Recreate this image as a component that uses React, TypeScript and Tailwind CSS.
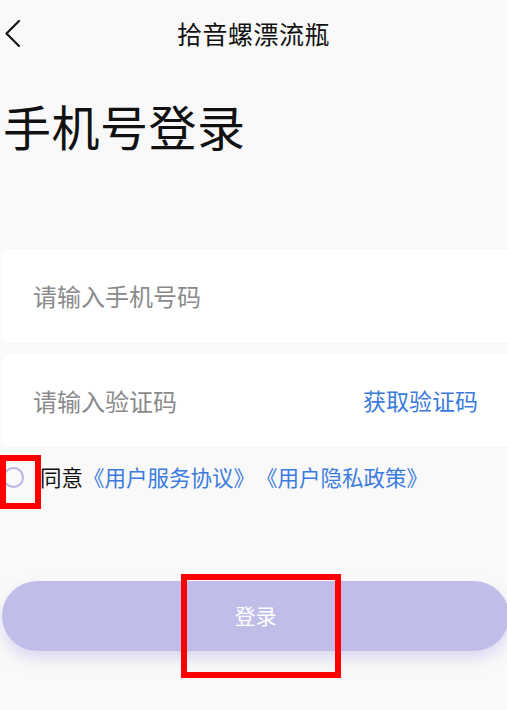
import React, { useState } from 'react';

const font = { fontFamily: '"Noto Sans CJK SC", "Noto Sans", sans-serif' };

export default function App() {
  const [phone, setPhone] = useState('');
  const [code, setCode] = useState('');
  const [agreed, setAgreed] = useState(false);

  return (
    <div className="relative w-[507px] h-[710px] overflow-hidden bg-[#f9f9f9]" style={font}>
      {/* Header */}
      <div className="relative h-[66px] flex items-center justify-center">
        <button className="absolute left-[4px] top-[19px] w-[18px] h-[30px] flex items-center">
          <svg width="18" height="30" viewBox="0 0 18 30" fill="none">
            <path d="M15 2 L2.5 14.5 L15 27" stroke="#111" strokeWidth="2.2" strokeLinecap="round" strokeLinejoin="round" />
          </svg>
        </button>
        <h1 className="text-[25px] leading-none text-[#111] tracking-[0.5px]">拾音螺漂流瓶</h1>
      </div>

      {/* Title */}
      <h2 className="mt-[35px] pl-[3px] text-[48px] leading-none text-[#111] tracking-[0.5px]">手机号登录</h2>

      {/* Inputs */}
      <div className="mt-[100px] ml-[2px] -mr-[8px] flex flex-col gap-[11px]">
        <div className="h-[94px] rounded-[7px] bg-white flex items-center pl-[31px]">
          <input
            value={phone}
            onChange={e => setPhone(e.target.value)}
            placeholder="请输入手机号码"
            className="w-full bg-transparent outline-none text-[24px] text-[#333] placeholder:text-[#8a8a8a]"
          />
        </div>
        <div className="h-[93px] rounded-[7px] bg-white flex items-center pl-[31px] pr-[37px]">
          <input
            value={code}
            onChange={e => setCode(e.target.value)}
            placeholder="请输入验证码"
            className="flex-1 min-w-0 bg-transparent outline-none text-[24px] text-[#333] placeholder:text-[#8a8a8a]"
          />
          <button className="text-[23px] text-[#3b7be0] whitespace-nowrap">获取验证码</button>
        </div>
      </div>

      {/* Agreement */}
      <div className="relative mt-[17px] flex items-center h-[26px]">
        <button
          onClick={() => setAgreed(!agreed)}
          className="ml-[3px] w-[21px] h-[21px] rounded-full border-[2px] border-[#bab4e6] flex items-center justify-center"
        >
          {agreed && <span className="w-[11px] h-[11px] rounded-full bg-[#a59ee3]" />}
        </button>
        <p className="ml-[16px] flex text-[21.5px] leading-none whitespace-nowrap">
          <span className="text-[#111]">同意</span>
          <span className="text-[#3b7be0]">《用户服务协议》</span>
          <span className="ml-[1px] text-[#3b7be0]">《用户隐私政策》</span>
        </p>
        <div className="absolute left-0 top-[-9px] w-[41px] h-[54px] border-[6px] border-[#ff0000] pointer-events-none" />
      </div>

      {/* Login button */}
      <div className="relative mt-[91px] ml-[2px] -mr-[2px]">
        <button className="w-full h-[70px] rounded-full bg-[#c1bde9] text-white text-[21px] shadow-[0_8px_14px_rgba(170,160,230,0.35)]">
          登录
        </button>
        <div className="absolute left-[179px] top-[-7px] w-[160px] h-[104px] border-[6px] border-[#ff0000] pointer-events-none" />
      </div>
    </div>
  );
}
